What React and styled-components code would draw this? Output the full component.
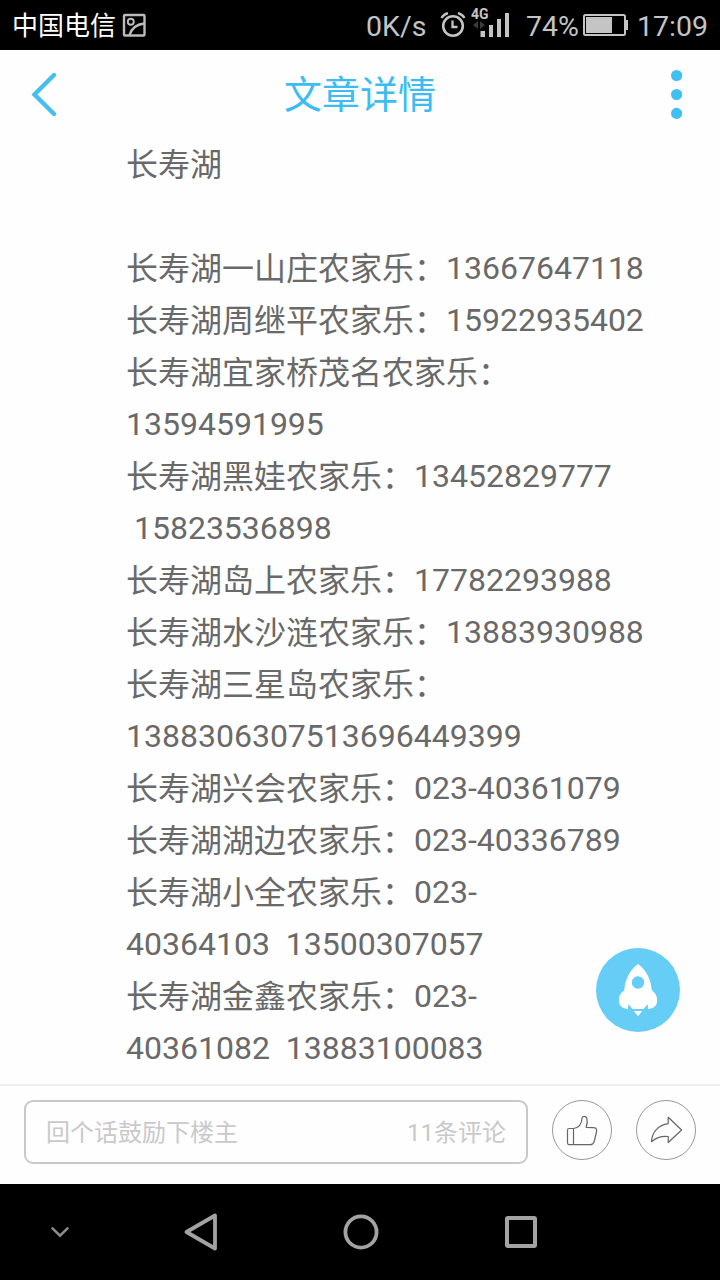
import React from 'react';
import styled, { createGlobalStyle } from 'styled-components';

const GlobalStyle = createGlobalStyle`
  * { box-sizing: border-box; }
  body { margin: 0; background: #fff; font-family: Roboto, "Noto Sans CJK SC", sans-serif; }
  svg { display: block; flex: none; }
`;

const Screen = styled.div`
  position: relative;
  display: flex;
  flex-direction: column;
  width: 720px;
  height: 1280px;
  overflow: hidden;
  background: #fefefe;
`;

const StatusBar = styled.div`
  display: flex;
  align-items: center;
  justify-content: space-between;
  height: 50px;
  flex: none;
  padding: 0 12px;
  background: #000;
  color: #c4c4c4;
`;

const StatusGroup = styled.div`
  display: flex;
  align-items: center;
  height: 50px;
`;

const Carrier = styled.span`
  width: 110px;
  font: 400 26px/48px "Noto Sans CJK SC", sans-serif;
  height: 50px;
  color: #fff;
  white-space: nowrap;
`;

const StatusText = styled.span`
  width: ${(p) => p.$width}px;
  font-size: 28.5px;
  line-height: 50px;
  padding-top: 3px;
  height: 52px;
  white-space: nowrap;
`;

const Signal = styled.div`
  width: 55px;
  height: 50px;
  padding-top: 7px;
`;

const NetworkType = styled.div`
  height: 14px;
  font-size: 14px;
  font-weight: 700;
  line-height: 14px;
`;

const Header = styled.header`
  display: grid;
  grid-template-columns: 60px 1fr 60px;
  align-items: center;
  height: 88px;
  flex: none;
  padding: 0 7px 0 7px;
`;

const HeaderButton = styled.button`
  display: flex;
  justify-content: ${(p) => (p.$end ? 'flex-end' : 'flex-start')};
  padding: ${(p) => (p.$end ? '0 30px 0 0' : '0 0 0 23px')};
  border: 0;
  background: none;
`;

const Title = styled.h1`
  margin: 0;
  padding-bottom: 4px;
  text-align: center;
  font: 400 38px/84px "Noto Sans CJK SC", sans-serif;
  color: #3bbcf2;
`;

const Article = styled.main`
  flex: 1;
  padding-left: 126px;
  color: #696969;
`;

const Line = styled.p`
  margin: 0;
  height: 52px;
  font-size: 32px;
  line-height: 52px;
  white-space: pre;
`;

const Name = styled.span`
  display: inline-block;
  height: 52px;
  vertical-align: top;
  padding-top: 1px;
`;

const RocketButton = styled.button`
  position: absolute;
  left: 596px;
  top: 948px;
  width: 84px;
  height: 84px;
  padding: 0;
  border: 0;
  border-radius: 50%;
  background: #66cdf7;
`;

const ReplyBar = styled.footer`
  display: flex;
  align-items: flex-start;
  gap: 24px;
  height: 100px;
  flex: none;
  padding: 14px 24px 0;
  border-top: 2px solid #efefef;
`;

const ReplyBox = styled.div`
  display: flex;
  justify-content: space-between;
  width: 504px;
  height: 64px;
  padding: 0 20px;
  border: 2px solid #c9c9c9;
  border-radius: 9px;
  font: 400 24px/62px Roboto, "Noto Sans CJK SC", sans-serif;
  color: #c9c9c9;
`;

const RoundButton = styled.button`
  width: 60px;
  height: 60px;
  padding: 0;
  border: 1px solid #999;
  border-radius: 50%;
  background: transparent;
`;

const NavBar = styled.nav`
  display: flex;
  height: 96px;
  flex: none;
  background: #000;
`;

const NavItem = styled.div`
  display: flex;
  align-items: center;
  justify-content: center;
  width: ${(p) => p.$width || 160}px;
`;

const lines = [
  { name: '长寿湖' },
  {},
  { name: '长寿湖一山庄农家乐：', phone: '13667647118' },
  { name: '长寿湖周继平农家乐：', phone: '15922935402' },
  { name: '长寿湖宜家桥茂名农家乐：' },
  { phone: '13594591995' },
  { name: '长寿湖黑娃农家乐：', phone: '13452829777' },
  { phone: ' 15823536898' },
  { name: '长寿湖岛上农家乐：', phone: '17782293988' },
  { name: '长寿湖水沙涟农家乐：', phone: '13883930988' },
  { name: '长寿湖三星岛农家乐：' },
  { phone: '1388306307513696449399' },
  { name: '长寿湖兴会农家乐：', phone: '023-40361079' },
  { name: '长寿湖湖边农家乐：', phone: '023-40336789' },
  { name: '长寿湖小全农家乐：', phone: '023-' },
  { phone: '40364103  13500307057' },
  { name: '长寿湖金鑫农家乐：', phone: '023-' },
  { phone: '40361082  13883100083' },
];

const PictureIcon = () => (
  <svg width="24" height="24" viewBox="0 0 24 24" fill="none" stroke="#bcbcbc" strokeWidth="2.4">
    <rect x="2" y="2" width="20.5" height="20.5" rx="1" />
    <circle cx="8.8" cy="8.8" r="3" strokeWidth="1.9" />
    <path d="M7.5 22C9.5 15.5 14 11.5 22 10.5" />
  </svg>
);

const AlarmIcon = () => (
  <svg width="32" height="30" viewBox="0 0 32 30" fill="none" stroke="#c4c4c4">
    <circle cx="14" cy="16" r="9.8" strokeWidth="2.6" />
    <path d="M13.5 10.5V17H18.5" strokeWidth="2.3" />
    <path d="M2.5 8Q4.5 4.5 9 3.2M25.5 8Q23.5 4.5 19 3.2" strokeWidth="2.4" />
  </svg>
);

const SignalBars = () => (
  <svg width="40" height="26" viewBox="0 0 40 26" style={{ marginTop: '-9px' }}>
    <path d="M2 13l5-4v8zM9 9l5 4-5 4z" fill="#3b3b3b" />
    <path d="M9.5 19h4.5v6H9.5zM18 13h4v12h-4zM26 7h4v18h-4zM34 1h4v24h-4z" fill="#c4c4c4" />
  </svg>
);

const BatteryIcon = () => (
  <svg width="54" height="24" viewBox="0 0 54 24">
    <rect x="1" y="2" width="41" height="20" rx="1.5" fill="none" stroke="#c4c4c4" strokeWidth="2" />
    <rect x="3" y="4" width="26" height="16" fill="#c4c4c4" />
    <path d="M43 7h2v10h-2z" fill="#c4c4c4" />
  </svg>
);

const BackIcon = () => (
  <svg width="30" height="46" viewBox="0 0 30 46" fill="none" stroke="#46bff0" strokeWidth="4.4" strokeLinecap="round">
    <path d="M24 4L4.5 23.5L24 43" />
  </svg>
);

const MoreIcon = () => (
  <svg width="12" height="50" viewBox="0 0 12 50" fill="#40bff3">
    <circle cx="5.6" cy="6.5" r="5.6" />
    <circle cx="5.6" cy="25.5" r="5.6" />
    <circle cx="5.6" cy="44.4" r="5.6" />
  </svg>
);

const RocketIcon = () => (
  <svg width="84" height="84" viewBox="0 0 84 84">
    <path
      d="M42 16C36 20 29.5 29 28.5 40C28.3 42 28.2 42.5 27 43.5C23.5 46 22.5 50 23 54C23.5 58 26.5 60.5 32 61.2L32.4 56L36.4 61H47.6L51.6 56L52 61.2C57.5 60.5 60.5 58 61 54C61.5 50 60.5 46 57 43.5C55.8 42.5 55.7 42 55.5 40C54.5 29 48 20 42 16Z"
      fill="#fff"
    />
    <circle cx="42" cy="34.5" r="6.2" fill="#66cdf7" />
    <path d="M37.8 63H46.2L42 68.3Z" fill="#fff" />
  </svg>
);

const ThumbIcon = () => (
  <svg width="58" height="58" viewBox="0 0 58 58" fill="none" stroke="#666" strokeWidth="1.2" strokeLinejoin="round">
    <path d="M20.5 27.5H16.2Q14.5 27.5 14.5 29.2V42Q14.5 43.7 16.2 43.7H37C39.5 43.7 40.7 42.5 41.3 40L43.6 30.5C44 28 43 26.6 40.5 26.6L33.2 26.3C34.4 22.8 34.4 19.5 33.8 17.2C33 14.8 29.7 14.6 29 17.2C28.8 22 26.5 26.5 20.5 27.5V43.5" />
  </svg>
);

const ShareIcon = () => (
  <svg width="58" height="58" viewBox="0 0 58 58" fill="none" stroke="#666" strokeWidth="1.2" strokeLinejoin="round">
    <path d="M31.2 16.3L44.6 29L31.2 41.5V35.5C25 34.8 19.8 36.2 14.5 40.7C14.8 31.5 21.5 23.8 31.2 22.6Z" />
  </svg>
);

export default function App() {
  return (
    <Screen>
      <GlobalStyle />
      <StatusBar>
        <StatusGroup>
          <Carrier>中国电信</Carrier>
          <PictureIcon />
        </StatusGroup>
        <StatusGroup>
          <StatusText $width={73}>0K/s</StatusText>
          <AlarmIcon />
          <Signal>
            <NetworkType>4G</NetworkType>
            <SignalBars />
          </Signal>
          <StatusText $width={57}>74%</StatusText>
          <BatteryIcon />
          <StatusText $width={71}>17:09</StatusText>
        </StatusGroup>
      </StatusBar>
      <Header>
        <HeaderButton aria-label="返回"><BackIcon /></HeaderButton>
        <Title>文章详情</Title>
        <HeaderButton $end aria-label="更多"><MoreIcon /></HeaderButton>
      </Header>
      <Article>
        {lines.map(({ name, phone }, i) => (
          <Line key={i}>
            {name && <Name>{name}</Name>}
            {phone}
          </Line>
        ))}
      </Article>
      <ReplyBar>
        <ReplyBox>
          <span>回个话鼓励下楼主</span>
          <span>11条评论</span>
        </ReplyBox>
        <RoundButton aria-label="点赞"><ThumbIcon /></RoundButton>
        <RoundButton aria-label="分享"><ShareIcon /></RoundButton>
      </ReplyBar>
      <NavBar>
        <NavItem $width={120}>
          <svg width="20" height="14" viewBox="0 0 20 14" fill="none" stroke="#8c8c8c" strokeWidth="2.6" strokeLinecap="round">
            <path d="M2.5 3.4L10 10.6L17.5 3.4" />
          </svg>
        </NavItem>
        <NavItem>
          <svg width="36" height="40" viewBox="0 0 36 40" fill="none" stroke="#a3a3a3" strokeWidth="3.8" strokeLinejoin="round">
            <path d="M33 3.5V36.5L4.5 20Z" />
          </svg>
        </NavItem>
        <NavItem>
          <svg width="38" height="38" viewBox="0 0 38 38" fill="none" stroke="#a3a3a3" strokeWidth="3.8">
            <circle cx="20" cy="19" r="15.6" />
          </svg>
        </NavItem>
        <NavItem>
          <svg width="34" height="34" viewBox="0 0 34 34" fill="none" stroke="#a3a3a3" strokeWidth="4">
            <rect x="4" y="3" width="28" height="28" rx="1" />
          </svg>
        </NavItem>
      </NavBar>
      <RocketButton aria-label="回到顶部"><RocketIcon /></RocketButton>
    </Screen>
  );
}
